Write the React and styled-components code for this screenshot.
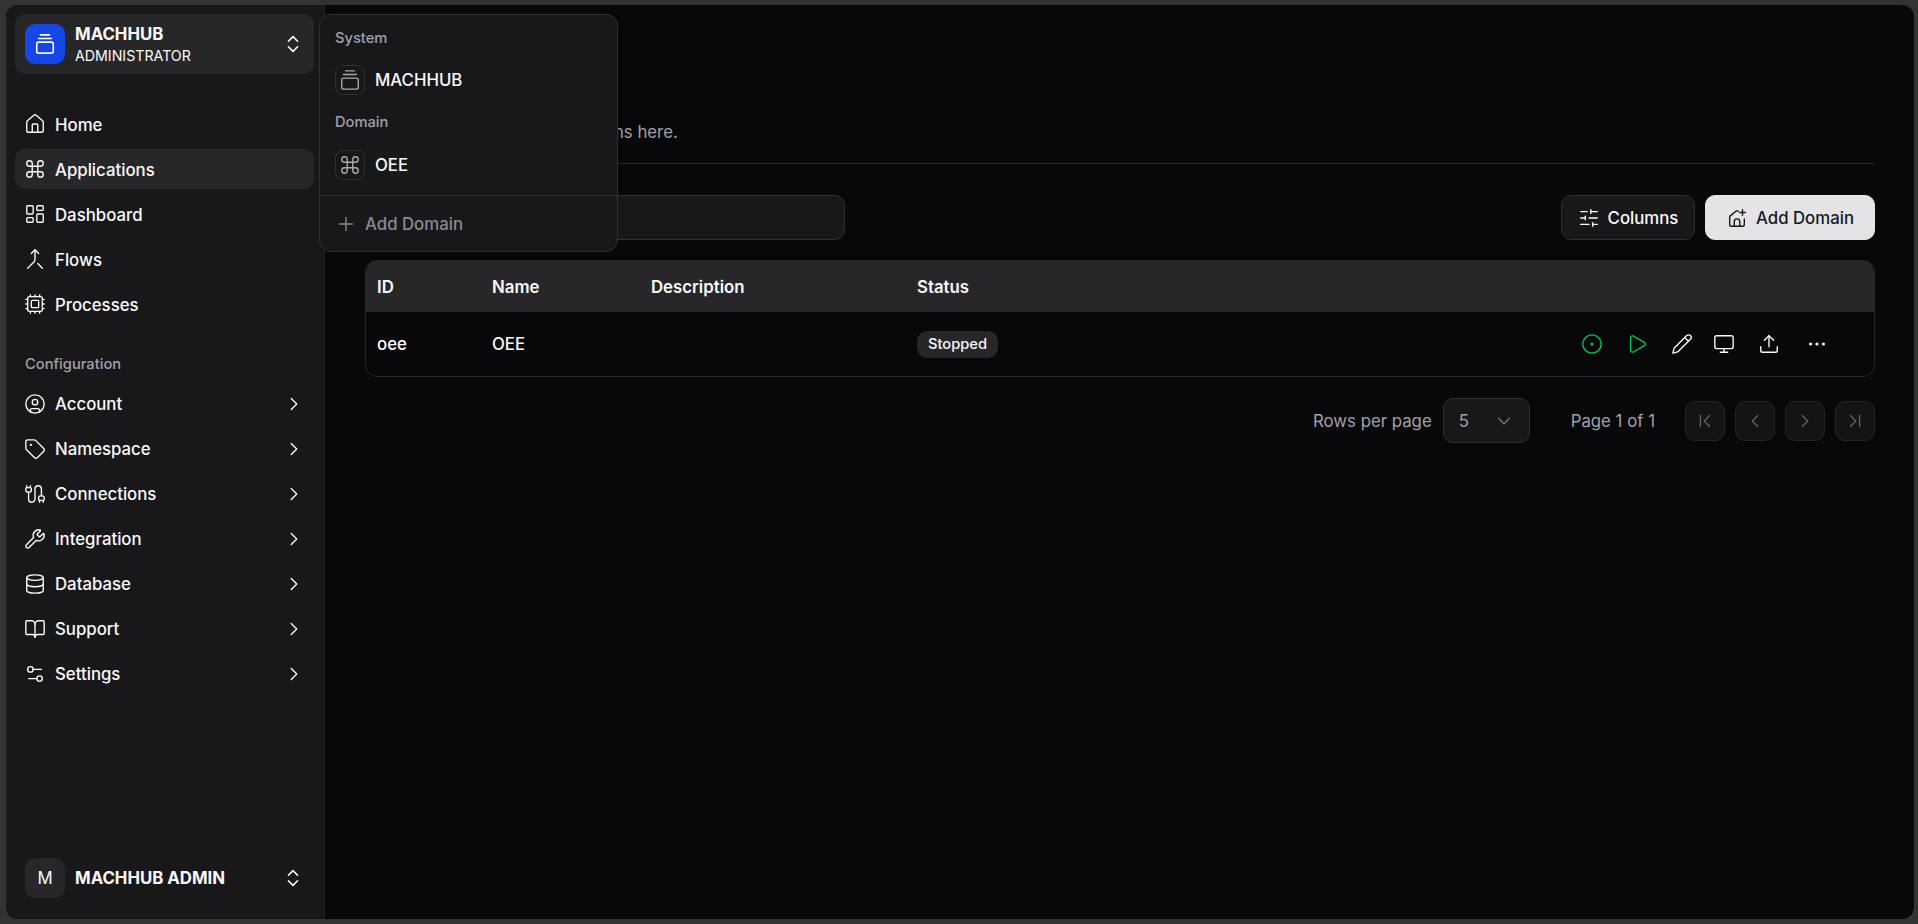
import styled, { createGlobalStyle } from 'styled-components';
import {
  GalleryVerticalEnd, ChevronsUpDown, House, Command, LayoutDashboard, Merge, Cpu,
  CircleUser, Tag, Cable, Wrench, Database, BookOpen, Settings2, ChevronRight,
  ChevronLeft, ChevronDown, ChevronFirst, ChevronLast, Plus, SlidersHorizontal,
  CircleDot, Play, Pencil, Monitor, Upload, Ellipsis,
} from 'lucide-react';

const mainNav = [
  { label: 'Home', Icon: House },
  { label: 'Applications', Icon: Command, active: true },
  { label: 'Dashboard', Icon: LayoutDashboard },
  { label: 'Flows', Icon: Merge },
  { label: 'Processes', Icon: Cpu },
];

const configNav = [
  { label: 'Account', Icon: CircleUser },
  { label: 'Namespace', Icon: Tag },
  { label: 'Connections', Icon: Cable },
  { label: 'Integration', Icon: Wrench },
  { label: 'Database', Icon: Database },
  { label: 'Support', Icon: BookOpen },
  { label: 'Settings', Icon: Settings2 },
];

const actions = [
  { Icon: CircleDot, width: 46, green: true },
  { Icon: Play, width: 46, green: true, shift: 3 },
  { Icon: Pencil, width: 42 },
  { Icon: Monitor, width: 42 },
  { Icon: Upload, width: 48 },
  { Icon: Ellipsis, width: 48 },
];

function AddHomeIcon() {
  return (
    <svg width="22" height="22" viewBox="0 0 24 24" fill="none" stroke="currentColor" strokeWidth="1.5" strokeLinecap="round" strokeLinejoin="round">
      <path d="M13.5 4.8l-.6-.5a1.4 1.4 0 0 0-1.8 0L4.7 9.7A2 2 0 0 0 4 11.2V19a2 2 0 0 0 2 2h12a2 2 0 0 0 2-2v-6" />
      <path d="M9 21v-5a3 3 0 0 1 6 0v5" />
      <path d="M15 6h6" />
      <path d="M18 3v6" />
    </svg>
  );
}

export default function App() {
  return (
    <>
      <GlobalStyle />
      <Frame>
        <Window>
          <Sidebar>
            <Switcher>
              <BrandIcon><GalleryVerticalEnd size={22} strokeWidth={1.75} /></BrandIcon>
              <SwitcherText>
                <strong>MACHHUB</strong>
                <span>ADMINISTRATOR</span>
              </SwitcherText>
              <ChevronsUpDown size={22} strokeWidth={1.75} />
            </Switcher>
            <NavList $textOffset={2}>
              {mainNav.map(({ label, Icon, active }) => (
                <NavItem key={label} $active={active}>
                  <Icon size={22} strokeWidth={1.5} />
                  <span>{label}</span>
                </NavItem>
              ))}
            </NavList>
            <SectionLabel>Configuration</SectionLabel>
            <NavList>
              {configNav.map(({ label, Icon }) => (
                <NavItem key={label}>
                  <Icon size={22} strokeWidth={1.5} />
                  <span>{label}</span>
                  <ChevronRight size={22} strokeWidth={1.5} />
                </NavItem>
              ))}
            </NavList>
            <UserRow>
              <Avatar>M</Avatar>
              <UserName>MACHHUB ADMIN</UserName>
              <ChevronsUpDown size={22} strokeWidth={1.75} />
            </UserRow>
          </Sidebar>
          <Main>
            <PageHeader>
              <Subtitle>Manage your domain applications here.</Subtitle>
            </PageHeader>
            <Toolbar>
              <SearchInput />
              <ToolbarButton>
                <SlidersHorizontal size={22} strokeWidth={1.5} />
                Columns
              </ToolbarButton>
              <ToolbarButton $primary>
                <AddHomeIcon />
                Add Domain
              </ToolbarButton>
            </Toolbar>
            <Table>
              <HeaderRow>
                <span>ID</span>
                <span>Name</span>
                <span>Description</span>
                <span>Status</span>
              </HeaderRow>
              <DataRow>
                <span>oee</span>
                <span>OEE</span>
                <span />
                <span><Badge>Stopped</Badge></span>
                <Actions>
                  {actions.map(({ Icon, width, green, shift }, i) => (
                    <ActionButton key={i} $width={width} $green={green} $shift={shift}>
                      <Icon size={22} strokeWidth={1.5} />
                    </ActionButton>
                  ))}
                </Actions>
              </DataRow>
            </Table>
            <Pagination>
              <PagerLabel>Rows per page</PagerLabel>
              <RowsSelect>
                5
                <ChevronDown size={22} strokeWidth={1.5} />
              </RowsSelect>
              <PageInfo>Page 1 of 1</PageInfo>
              <PagerButtons>
                <PagerButton><ChevronFirst size={22} strokeWidth={1.5} /></PagerButton>
                <PagerButton><ChevronLeft size={22} strokeWidth={1.5} /></PagerButton>
                <PagerButton><ChevronRight size={22} strokeWidth={1.5} /></PagerButton>
                <PagerButton><ChevronLast size={22} strokeWidth={1.5} /></PagerButton>
              </PagerButtons>
            </Pagination>
          </Main>
          <Popover>
            <PopoverLabel>System</PopoverLabel>
            <PopoverRow>
              <PopoverIcon><GalleryVerticalEnd size={22} strokeWidth={1.5} /></PopoverIcon>
              MACHHUB
            </PopoverRow>
            <PopoverLabel>Domain</PopoverLabel>
            <PopoverRow>
              <PopoverIcon><Command size={22} strokeWidth={1.5} /></PopoverIcon>
              OEE
            </PopoverRow>
            <PopoverDivider />
            <AddRow>
              <Plus size={22} strokeWidth={1.5} />
              Add Domain
            </AddRow>
          </Popover>
        </Window>
      </Frame>
    </>
  );
}

const GlobalStyle = createGlobalStyle`
  html, body {
    margin: 0;
    height: 100%;
    background: #333335;
    font-family: Inter, "Liberation Sans", sans-serif;
    color: #fafafa;
  }
  * {
    box-sizing: border-box;
  }
`;

const Frame = styled.div`
  height: 100vh;
  padding: 5px 4px 5px 6px;
  background: #333335;
`;

const Window = styled.div`
  position: relative;
  display: flex;
  height: 100%;
  border-radius: 12px;
  overflow: hidden;
  background: #08080a;
`;

const Sidebar = styled.aside`
  display: flex;
  flex-direction: column;
  flex: 0 0 319px;
  padding: 9px 10px 21px 9px;
  background: #18181b;
  border-right: 1px solid #202023;
`;

const Switcher = styled.div`
  display: flex;
  align-items: center;
  height: 60px;
  padding: 0 10px;
  margin-bottom: 30px;
  border-radius: 10px;
  background: #27272a;
`;

const BrandIcon = styled.div`
  display: flex;
  align-items: center;
  justify-content: center;
  flex: 0 0 40px;
  height: 40px;
  border-radius: 10px;
  background: #1447e6;
`;

const SwitcherText = styled.div`
  display: flex;
  flex-direction: column;
  flex: 1;
  margin-left: 10px;
  padding-top: 1px;
  line-height: 21px;

  strong {
    font-size: 16.8px;
    font-weight: 700;
  }

  span {
    font-size: 14.2px;
  }
`;

const NavList = styled.nav`
  display: flex;
  flex-direction: column;
  gap: 5px;

  span {
    padding-top: ${props => props.$textOffset || 0}px;
  }
`;

const NavItem = styled.div`
  display: flex;
  align-items: center;
  gap: 9px;
  height: 40px;
  padding: 0 9px;
  border-radius: 10px;
  font-size: 16.8px;
  font-weight: 500;
  background: ${props => (props.$active ? '#27272a' : 'transparent')};

  span {
    flex: 1;
  }
`;

const SectionLabel = styled.div`
  display: flex;
  align-items: center;
  height: 60px;
  padding: 19px 0 0 10px;
  font-size: 14.7px;
  font-weight: 500;
  color: #a1a1aa;
`;

const UserRow = styled.div`
  display: flex;
  align-items: center;
  margin-top: auto;
  padding: 0 10px;
`;

const Avatar = styled.div`
  display: flex;
  align-items: center;
  justify-content: center;
  flex: 0 0 40px;
  height: 40px;
  border-radius: 10px;
  background: #27272a;
  font-size: 16.8px;
`;

const UserName = styled.div`
  flex: 1;
  margin-left: 10px;
  font-size: 16.8px;
  font-weight: 700;
`;

const Main = styled.main`
  flex: 1;
  min-width: 0;
  padding: 0 39px 0 40px;
`;

const PageHeader = styled.header`
  height: 159px;
  padding-top: 115px;
  border-bottom: 1px solid #27272a;
`;

const Subtitle = styled.p`
  margin: 0;
  font-size: 16.8px;
  line-height: 24px;
  color: #a1a1aa;
`;

const Toolbar = styled.div`
  display: flex;
  align-items: center;
  gap: 10px;
  margin-top: 31px;
`;

const SearchInput = styled.div`
  width: 480px;
  height: 45px;
  margin-right: auto;
  border: 1px solid #303034;
  border-radius: 10px;
  background: #18181b;
`;

const ToolbarButton = styled.button`
  display: flex;
  align-items: center;
  justify-content: center;
  gap: 8px;
  width: ${props => (props.$primary ? '170px' : '134px')};
  height: 45px;
  border: 1px solid ${props => (props.$primary ? '#e4e4e7' : '#303034')};
  border-radius: 10px;
  background: ${props => (props.$primary ? '#e4e4e7' : '#18181b')};
  color: ${props => (props.$primary ? '#18181b' : '#fafafa')};
  font: 500 16.8px Inter, sans-serif;
`;

const Table = styled.div`
  margin-top: 20px;
  border: 1px solid #27272a;
  border-radius: 12px;
  overflow: hidden;
`;

const HeaderRow = styled.div`
  display: grid;
  grid-template-columns: 115px 159px 266px 1fr;
  align-items: center;
  height: 51px;
  padding-left: 11px;
  background: #27272a;
  font-size: 16.8px;
  font-weight: 600;
`;

const DataRow = styled.div`
  display: grid;
  grid-template-columns: 115px 159px 266px 1fr auto;
  align-items: center;
  height: 64px;
  padding: 0 33px 0 11px;
  font-size: 16.8px;
  font-weight: 500;
`;

const Badge = styled.span`
  display: inline-flex;
  align-items: center;
  height: 27px;
  padding: 0 11px;
  border-radius: 10px;
  background: #27272a;
  font-size: 14.7px;
  font-weight: 500;
`;

const Actions = styled.div`
  display: flex;
`;

const ActionButton = styled.div`
  display: flex;
  align-items: center;
  justify-content: center;
  width: ${props => props.$width}px;
  padding-right: ${props => props.$shift || 0}px;
  color: ${props => (props.$green ? '#00c950' : '#fafafa')};
`;

const Pagination = styled.div`
  display: flex;
  align-items: center;
  justify-content: flex-end;
  margin-top: 21px;
  font-size: 16.8px;
  color: #a1a1aa;
`;

const PagerLabel = styled.span`
  margin-right: 11px;
`;

const RowsSelect = styled.div`
  display: flex;
  align-items: center;
  justify-content: space-between;
  width: 87px;
  height: 45px;
  padding: 0 14px 0 15px;
  border: 1px solid #303034;
  border-radius: 10px;
  background: #18181b;

  svg {
    color: #71717a;
  }
`;

const PageInfo = styled.span`
  margin: 0 30px 0 41px;
`;

const PagerButtons = styled.div`
  display: flex;
  gap: 10px;
`;

const PagerButton = styled.div`
  display: flex;
  align-items: center;
  justify-content: center;
  width: 40px;
  height: 40px;
  border: 1px solid #242427;
  border-radius: 10px;
  background: #141416;
  color: #606066;
`;

const Popover = styled.div`
  position: absolute;
  top: 9px;
  left: 313px;
  width: 299px;
  height: 238px;
  padding: 6px;
  border: 1px solid #303034;
  border-radius: 12px;
  background: #18181b;
`;

const PopoverRow = styled.div`
  display: flex;
  align-items: center;
  gap: 10px;
  height: 40px;
  margin: 5px 0;
  padding-left: 9px;
  font-size: 16.8px;
  font-weight: 500;
`;

const PopoverLabel = styled.div`
  display: flex;
  align-items: center;
  height: 34px;
  padding-left: 9px;
  font-size: 14.7px;
  font-weight: 500;
  color: #a1a1aa;

  ${PopoverRow} + & {
    height: 35px;
    padding-bottom: 1px;
  }
`;

const PopoverIcon = styled.div`
  display: flex;
  align-items: center;
  justify-content: center;
  width: 30px;
  height: 30px;
  border: 1px solid #303034;
  border-radius: 8px;
  color: #a8a8b0;
`;

const PopoverDivider = styled.div`
  height: 1px;
  margin: 10px -6px 8px;
  background: #303034;
`;

const AddRow = styled.div`
  display: flex;
  align-items: center;
  gap: 8px;
  height: 40px;
  padding-left: 9px;
  font-size: 16.8px;
  font-weight: 500;
  color: #8a8a92;
`;
